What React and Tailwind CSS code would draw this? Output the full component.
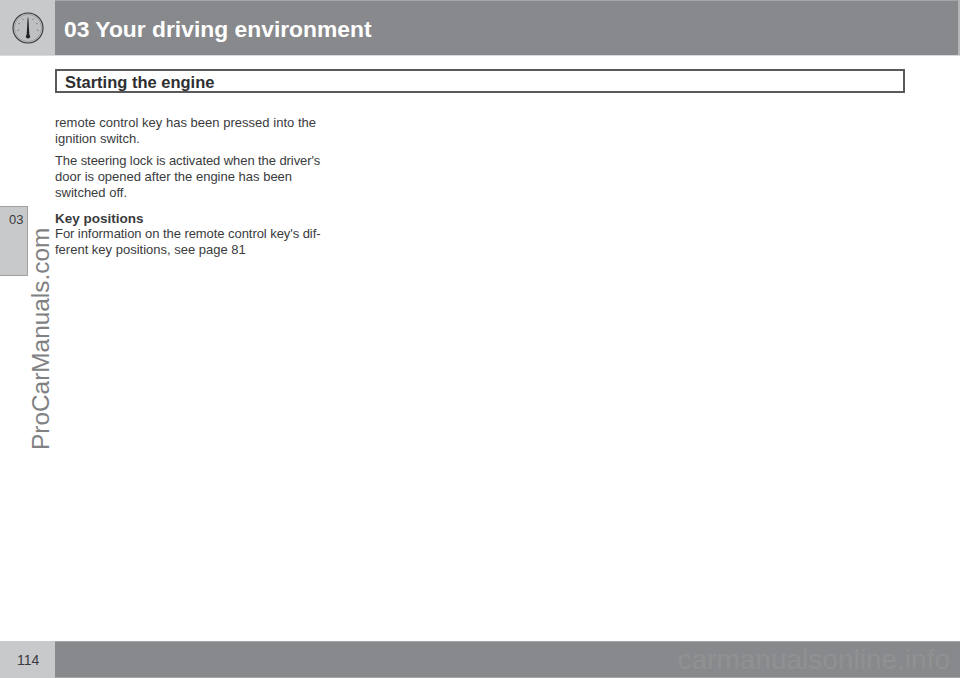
import React from "react";

const SANS = "font-['Liberation_Sans',Arial,sans-serif]";

function Gauge() {
  return (
    <svg width="32" height="32" viewBox="0 0 32 32" fill="none">
      <circle cx="16" cy="16" r="15" fill="#bfc0c2" stroke="#333" strokeWidth="1.1" />
      <circle cx="16" cy="16" r="13.6" stroke="#8a8b8d" strokeWidth="0.6" />
      <g stroke="#666" strokeWidth="0.8">
        <path d="M5.5 18.5l1.6-.4" />
        <path d="M6.4 11.2l1.5.8" />
        <path d="M10.5 6.6l.9 1.4" />
        <path d="M16 5v1.7" />
        <path d="M21.5 6.6l-.9 1.4" />
        <path d="M25.6 11.2l-1.5.8" />
        <path d="M26.5 18.5l-1.6-.4" />
      </g>
      <path d="M15.6 6.5h.8l1 17h-2.8z" fill="#222" />
      <circle cx="16" cy="24.5" r="2.1" fill="#222" />
    </svg>
  );
}

export default function App() {
  return (
    <div className={`${SANS} relative flex flex-col w-[960px] h-[678px] overflow-hidden bg-white text-[#3a3b3d]`}>
      {/* Header */}
      <div className="flex h-[56px] shrink-0 border-b border-[#d9dadb]">
        <div className="flex items-center justify-center w-[55px] bg-[#c8c9cb]">
          <Gauge />
        </div>
        <div className="flex flex-1 items-center pl-[9px] pt-[3px] bg-[#88898c] border-t border-[#a5a6a8] border-r-[2px] border-r-[#b5b6b8]">
          <h1 className="text-[22.85px] font-bold leading-none text-white">03 Your driving environment</h1>
        </div>
      </div>

      <div className="flex flex-1 min-h-0">
        {/* Chapter tab */}
        <div className="w-[55px] shrink-0 pt-[150px]">
          <div className="w-[28px] h-[70px] bg-[#c8c9cb] border-t border-r border-b border-[#a0a1a3] pt-[3px] pl-[9px] text-[13px] leading-[20px]">
            03
          </div>
        </div>

        {/* Content */}
        <div className="flex-1 pt-[13px]">
          <div className="w-[850px] h-[24px] border-2 border-[#58595b] pl-[8px] text-[16.5px] font-bold leading-[23px] text-[#2e2f31]">
            Starting the engine
          </div>
          <div className="mt-[22px] whitespace-nowrap text-[13px] leading-[16px]">
            <p className="mb-[6px] tracking-[0.02px]">remote control key has been pressed into the<br />ignition switch.</p>
            <p className="mb-[10px]">
              <span className="tracking-[-0.08px]">The steering lock is activated when the driver's</span><br />
              door is opened after the engine has been<br />
              switched off.
            </p>
            <p className="font-bold text-[13.5px] leading-[15px]">Key positions</p>
            <p>
              <span className="tracking-[-0.06px]">For information on the remote control key's dif-</span><br />
              ferent key positions, see page 81
            </p>
          </div>
        </div>
      </div>

      {/* Footer */}
      <div className="flex h-[37px] shrink-0">
        <div className="flex items-center pl-[17px] pt-[2px] w-[55px] bg-[#c8c9cb] text-[14px]">114</div>
        <div className="flex flex-1 items-center justify-end pr-[10px] bg-[#88898c] border-t border-[#a5a6a8] border-b border-b-[#a5a6a8]">
          <span className="text-[28px] leading-none text-[#909193]">carmanualsonline.info</span>
        </div>
      </div>

      {/* Site watermark */}
      <div className="absolute left-[28px] top-[450px] origin-top-left -rotate-90 whitespace-nowrap text-[24.4px] leading-[26px] text-[#808183]">
        ProCarManuals.com
      </div>
    </div>
  );
}
